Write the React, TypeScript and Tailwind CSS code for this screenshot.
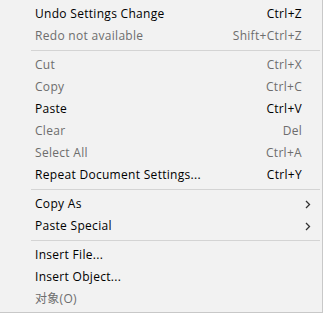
import React from 'react';

type Item =
  | { sep: true }
  | { sep?: false; label: string; shortcut?: string; disabled?: boolean; submenu?: boolean };

const ITEMS: Item[] = [
  { label: 'Undo Settings Change', shortcut: 'Ctrl+Z' },
  { label: 'Redo not available', shortcut: 'Shift+Ctrl+Z', disabled: true },
  { sep: true },
  { label: 'Cut', shortcut: 'Ctrl+X', disabled: true },
  { label: 'Copy', shortcut: 'Ctrl+C', disabled: true },
  { label: 'Paste', shortcut: 'Ctrl+V' },
  { label: 'Clear', shortcut: 'Del', disabled: true },
  { label: 'Select All', shortcut: 'Ctrl+A', disabled: true },
  { label: 'Repeat Document Settings...', shortcut: 'Ctrl+Y' },
  { sep: true },
  { label: 'Copy As', submenu: true },
  { label: 'Paste Special', submenu: true },
  { sep: true },
  { label: 'Insert File...' },
  { label: 'Insert Object...' },
  { label: '对象(O)', disabled: true },
];

const Chevron = () => (
  <svg width="6" height="9" viewBox="0 0 6 9" className="text-[#333333]">
    <path d="M1 1 L4.5 4.5 L1 8" fill="none" stroke="currentColor" strokeWidth="1.3" />
  </svg>
);

export default function App() {
  return (
    <div
      className="w-[323px] h-[313px] bg-[#f2f2f2] border-r border-b border-[#c8c8c8] pt-[3px] text-[12px] overflow-hidden"
      style={{ fontFamily: '"Open Sans", "Noto Sans CJK SC", sans-serif' }}
    >
      {ITEMS.map((it, i) =>
        it.sep ? (
          <div key={i} className="h-[7px] flex items-center pl-[31px] pr-[2px]">
            <div className="h-px w-full bg-[#d4d4d4]" />
          </div>
        ) : (
          <div
            key={i}
            className={`h-[22px] flex items-center pl-[35px] pr-[20px] tracking-[0.3px] ${
              it.disabled ? 'text-[#6d6d6d]' : 'text-black'
            }`}
          >
            <span className="flex-1 leading-none">{it.label}</span>
            {it.shortcut && <span className="leading-none">{it.shortcut}</span>}
            {it.submenu && (
              <span className="mr-[-9px]">
                <Chevron />
              </span>
            )}
          </div>
        )
      )}
    </div>
  );
}
